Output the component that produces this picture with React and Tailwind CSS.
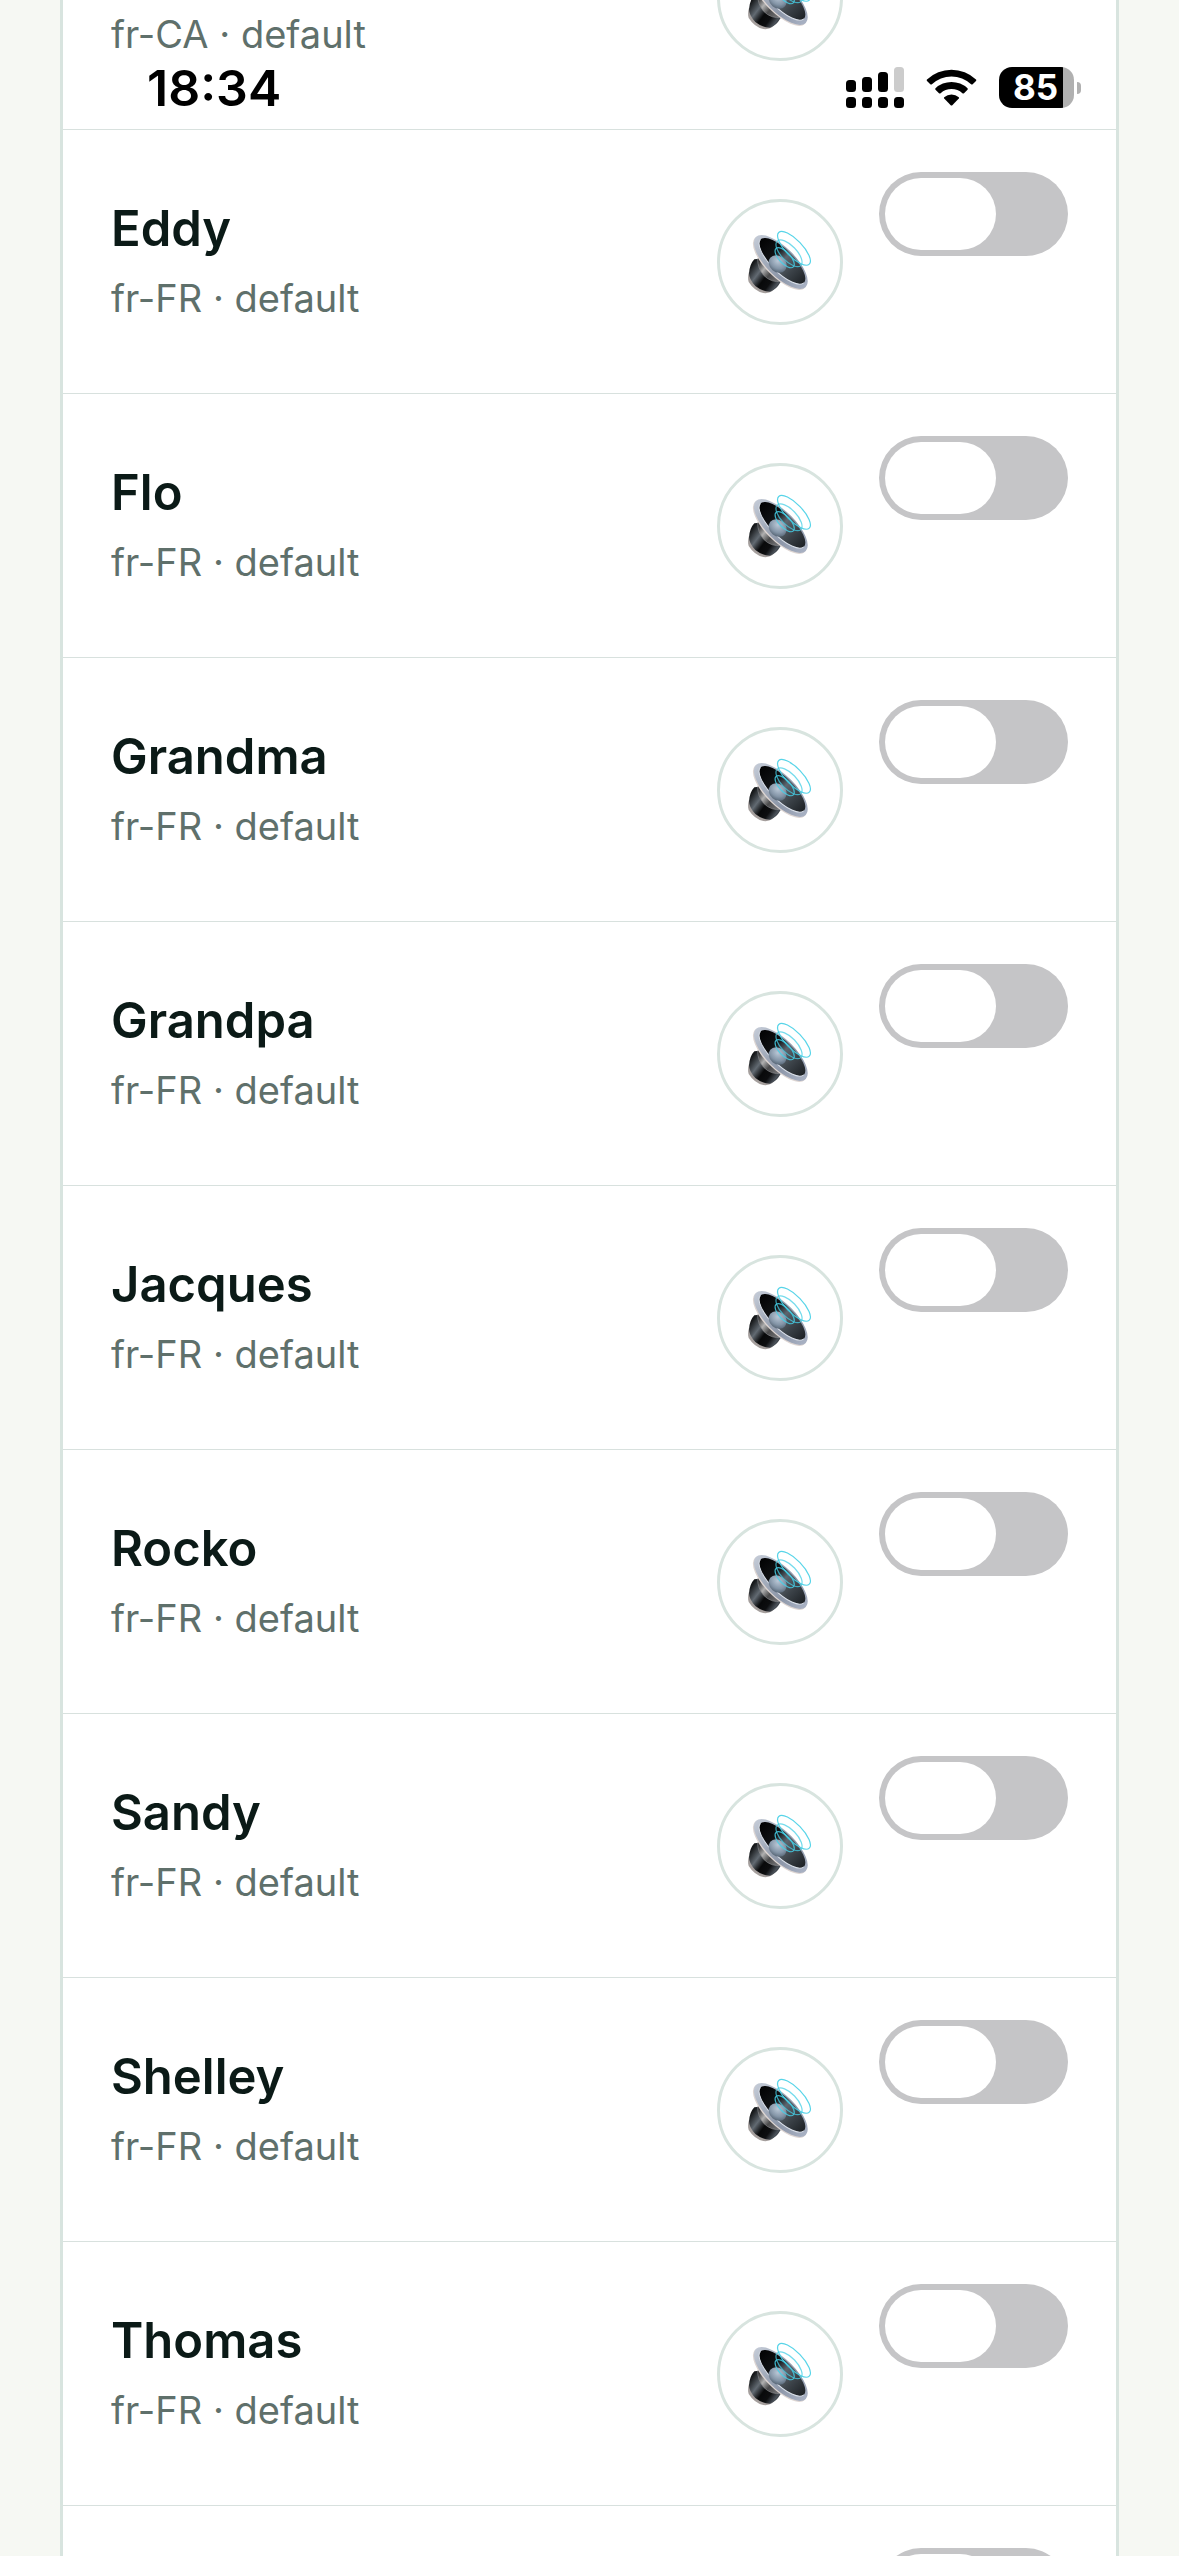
import { useId, useState } from "react";

const VOICES = [
  { name: "Amélie", lang: "fr-CA" },
  { name: "Eddy", lang: "fr-FR" },
  { name: "Flo", lang: "fr-FR" },
  { name: "Grandma", lang: "fr-FR" },
  { name: "Grandpa", lang: "fr-FR" },
  { name: "Jacques", lang: "fr-FR" },
  { name: "Rocko", lang: "fr-FR" },
  { name: "Sandy", lang: "fr-FR" },
  { name: "Shelley", lang: "fr-FR" },
  { name: "Thomas", lang: "fr-FR" },
  { name: "Marie", lang: "fr-FR" },
];

function SpeakerIcon() {
  const id = useId();
  const rim = `${id}-rim`;
  const cone = `${id}-cone`;
  const dome = `${id}-dome`;
  const neck = `${id}-neck`;
  const magnet = `${id}-magnet`;

  return (
    <svg viewBox="111 117 198 198" className="size-[66px]" aria-hidden="true">
      <defs>
        <linearGradient id={rim} x1="0" y1="0" x2="1" y2="0">
          <stop offset="0" stopColor="#c3cad6" />
          <stop offset="0.35" stopColor="#a3acbb" />
          <stop offset="0.65" stopColor="#8c96a8" />
          <stop offset="1" stopColor="#a9b2c4" />
        </linearGradient>
        <linearGradient id={cone} x1="0" y1="0" x2="1" y2="0">
          <stop offset="0" stopColor="#020203" />
          <stop offset="0.32" stopColor="#101214" />
          <stop offset="0.5" stopColor="#5d666f" />
          <stop offset="0.72" stopColor="#3c4349" />
          <stop offset="1" stopColor="#1d2125" />
        </linearGradient>
        <radialGradient id={dome} cx="0.4" cy="0.35" r="0.75">
          <stop offset="0" stopColor="#b9c7d6" />
          <stop offset="0.6" stopColor="#8394a6" />
          <stop offset="1" stopColor="#4d5b6a" />
        </radialGradient>
        <linearGradient id={neck} x1="145" y1="215" x2="215" y2="275" gradientUnits="userSpaceOnUse">
          <stop offset="0" stopColor="#2b2b2d" />
          <stop offset="0.3" stopColor="#b0b0b0" />
          <stop offset="0.55" stopColor="#4a4a4b" />
          <stop offset="1" stopColor="#808083" />
        </linearGradient>
        <linearGradient id={magnet} x1="118" y1="235" x2="205" y2="300" gradientUnits="userSpaceOnUse">
          <stop offset="0" stopColor="#16181a" />
          <stop offset="0.28" stopColor="#626a72" />
          <stop offset="0.5" stopColor="#08090a" />
          <stop offset="0.7" stopColor="#0d0e10" />
          <stop offset="0.88" stopColor="#4b525a" />
          <stop offset="1" stopColor="#17191b" />
        </linearGradient>
      </defs>

      {/* magnet with its lighter foot */}
      <path d="M117 246 Q112 262 116 276 Q134 304 160 309 Q176 311 186 304 L206 284 Z" fill="#a59f9d" />
      <path d="M133 208 Q119 222 117 250 Q117 268 136 288 Q156 304 180 305 Q198 300 212 276 Q208 262 188 250 Q160 232 150 206 Z" fill={`url(#${magnet})`} />
      <path d="M144 203 Q143 236 161 256 Q184 279 213 273 L222 262 L160 188 Z" fill={`url(#${neck})`} />
      <path d="M143 205 Q143 236 161 256 Q184 279 214 274" fill="none" stroke="#8b8d90" strokeWidth="2" />

      <g transform="rotate(45 211 216)">
        <ellipse cx="212" cy="219" rx="106" ry="43" fill="#ddd5d2" />
        <ellipse cx="212" cy="215" rx="106" ry="43" fill={`url(#${rim})`} />
        <ellipse cx="213" cy="210" rx="92" ry="34" fill={`url(#${cone})`} />
        <path d="M121 210 A92 34 0 0 0 305 210" fill="none" stroke="#dce2eb" strokeWidth="3" />
      </g>
      <ellipse cx="203" cy="222" rx="29" ry="24" transform="rotate(40 203 222)" fill={`url(#${dome})`} />

      {/* sound waves */}
      <g fill="none" stroke="#45cfe6" strokeWidth="3.6">
        <ellipse cx="224" cy="203" rx="38" ry="17" transform="rotate(47 224 203)" strokeOpacity="0.85" />
        <ellipse cx="237" cy="190" rx="51" ry="23" transform="rotate(46 237 190)" strokeOpacity="0.75" />
        <ellipse cx="252" cy="175" rx="66" ry="25" transform="rotate(46 252 175)" strokeOpacity="0.9" />
      </g>
    </svg>
  );
}

function Toggle({ label }) {
  const [on, setOn] = useState(false);
  return (
    <input
      type="checkbox"
      role="switch"
      aria-label={label}
      checked={on}
      onChange={(e) => setOn(e.target.checked)}
      className="h-[84px] w-[189px] shrink-0 cursor-pointer appearance-none self-start rounded-full bg-[#c5c5c7] p-1.5 before:block before:h-[72px] before:w-[111px] before:rounded-full before:bg-white checked:bg-[#34c759] checked:before:ml-auto"
    />
  );
}

function VoiceRow({ voice }) {
  return (
    <li className="flex min-h-[264px] items-center gap-9 border-b border-[#d8e1de] px-12 py-[42px]">
      <div className="min-w-0 flex-1">
        <div className="truncate text-[49px] leading-[60px] font-semibold text-[#0b1a17]">{voice.name}</div>
        <div className="mt-3 truncate text-[38px] leading-[54px] text-[#5f706b]">{voice.lang} · default</div>
      </div>
      <button
        type="button"
        aria-label={`Play ${voice.name}`}
        className="flex size-[126px] shrink-0 items-center justify-center rounded-full border-3 border-[#d8e4df] bg-white"
      >
        <SpeakerIcon />
      </button>
      <Toggle label={voice.name} />
    </li>
  );
}

function StatusBar() {
  return (
    <div className="pointer-events-none absolute inset-x-0 top-0 flex h-[129px] items-end justify-between pr-[98px] pb-[11px] pl-[147px] text-black">
      <div className="text-[50px] leading-[60px] font-semibold">18:34</div>
      <div className="flex items-center gap-[22px] pb-[10px]">
        <svg viewBox="0 0 58 41" className="h-[41px] w-[58px]" aria-hidden="true">
          <rect x="0" y="13" width="10" height="12" rx="3.5" />
          <rect x="16" y="10" width="10" height="15" rx="3.5" />
          <rect x="32" y="5" width="10" height="20" rx="3.5" />
          <rect x="48" y="0" width="10" height="25" rx="3.5" fill="#cccccc" />
          <rect x="0" y="30" width="10" height="11" rx="3.5" />
          <rect x="16" y="30" width="10" height="11" rx="3.5" />
          <rect x="32" y="30" width="10" height="11" rx="3.5" />
          <rect x="48" y="30" width="10" height="11" rx="3.5" />
        </svg>
        <svg viewBox="0 0 51 37" className="h-[37px] w-[51px]" aria-hidden="true">
          <path d="M1 10.5 A35.5 35.5 0 0 1 50 10.5 Q50.6 11.2 50 11.9 L46.7 15.2 Q45.9 15.9 45.1 15.2 A28.5 28.5 0 0 0 5.9 15.2 Q5.1 15.9 4.3 15.2 L1 11.9 Q0.4 11.2 1 10.5 Z" />
          <path d="M9.5 19.3 A23.2 23.2 0 0 1 41.5 19.3 Q42.2 20 41.5 20.7 L38 24.2 Q37.2 24.8 36.4 24.2 A16.2 16.2 0 0 0 14.6 24.2 Q13.8 24.8 13 24.2 L9.5 20.7 Q8.8 20 9.5 19.3 Z" />
          <path d="M18.2 28.2 A11.5 11.5 0 0 1 32.8 28.2 Q33.4 28.9 32.8 29.6 L26.3 36.2 Q25.5 36.9 24.7 36.2 L18.2 29.6 Q17.6 28.9 18.2 28.2 Z" />
        </svg>
        <div className="flex items-center gap-[3px]">
          <div className="flex h-[41px] w-[75px] items-center justify-center rounded-[13px] bg-linear-to-r from-black from-85% to-[#b0b0b0] to-85% pr-0.5 text-[35px] leading-[41px] font-bold text-white">
            85
          </div>
          <div className="h-3 w-1 rounded-r-full bg-[#b0b0b0]" />
        </div>
      </div>
    </div>
  );
}

export default function App() {
  return (
    <main className="relative h-screen overflow-hidden bg-[#f6f8f3] px-[60px] font-['Inter',sans-serif]">
      {/* list is scrolled so that the first voice sits half under the status bar */}
      <ul className="-mt-[134px] border-x-3 border-[#d8e4df] bg-white">
        {VOICES.map((voice) => (
          <VoiceRow key={voice.name} voice={voice} />
        ))}
      </ul>
      <StatusBar />
    </main>
  );
}
